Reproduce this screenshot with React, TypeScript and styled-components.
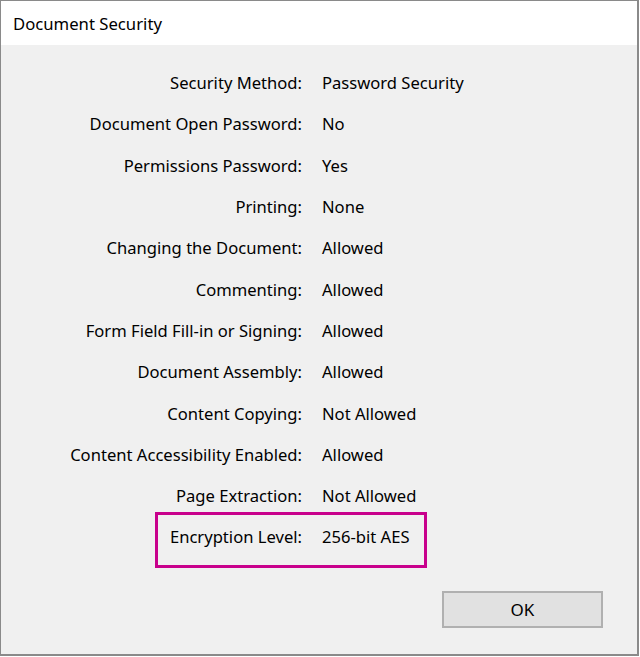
import React from "react";
import styled, { createGlobalStyle } from "styled-components";

const Global = createGlobalStyle`
  html, body { margin: 0; padding: 0; background: #ffffff; }
  body { font-family: "Noto Sans", "Open Sans", sans-serif; }
`;

const Window = styled.div`
  box-sizing: border-box;
  width: 639px;
  height: 656px;
  border-top: 1px solid #8a8a8a;
  border-left: 1px solid #8a8a8a;
  border-right: 2px solid #8a8a8a;
  border-bottom: 2px solid #8a8a8a;
  background: #f0f0f0;
  display: flex;
  flex-direction: column;
`;

const TitleBar = styled.div`
  height: 44px;
  background: #ffffff;
  display: flex;
  align-items: center;
  padding-left: 12px;
  font-size: 16.7px;
  color: #000;
`;

const Body = styled.div`
  flex: 1;
  display: flex;
  flex-direction: column;
  padding-top: 17px;
`;

const Row = styled.div<{ $highlight?: boolean }>`
  position: relative;
  height: 41.3px;
  display: flex;
  align-items: center;
  gap: 20px;
  font-size: 16.6px;
  color: #000;
  ${(p) =>
    p.$highlight &&
    `
    &::after {
      content: "";
      position: absolute;
      left: 154px;
      width: 272px;
      top: -4px;
      height: 56px;
      box-sizing: border-box;
      border: 3px solid #c8008c;
      pointer-events: none;
    }
  `}
`;

const Label = styled.span`
  width: 301px;
  text-align: right;
  flex: none;
`;

const Value = styled.span``;

const Footer = styled.div`
  display: flex;
  justify-content: flex-end;
  padding: 33px 34px 0 0;
`;

const Button = styled.button`
  box-sizing: border-box;
  width: 161px;
  height: 37px;
  background: #e1e1e1;
  border: 2px solid #b0b0b0;
  font-family: "Noto Sans", "Open Sans", sans-serif;
  font-size: 17px;
  color: #000;
  padding: 0;
`;

const rows: [string, string][] = [
  ["Security Method:", "Password Security"],
  ["Document Open Password:", "No"],
  ["Permissions Password:", "Yes"],
  ["Printing:", "None"],
  ["Changing the Document:", "Allowed"],
  ["Commenting:", "Allowed"],
  ["Form Field Fill-in or Signing:", "Allowed"],
  ["Document Assembly:", "Allowed"],
  ["Content Copying:", "Not Allowed"],
  ["Content Accessibility Enabled:", "Allowed"],
  ["Page Extraction:", "Not Allowed"],
  ["Encryption Level:", "256-bit AES"],
];

export default function App() {
  return (
    <>
      <Global />
      <Window>
        <TitleBar>Document Security</TitleBar>
        <Body>
          {rows.map(([l, v], i) => (
            <Row key={l} $highlight={i === rows.length - 1}>
              <Label>{l}</Label>
              <Value>{v}</Value>
            </Row>
          ))}
          <Footer>
            <Button>OK</Button>
          </Footer>
        </Body>
      </Window>
    </>
  );
}
